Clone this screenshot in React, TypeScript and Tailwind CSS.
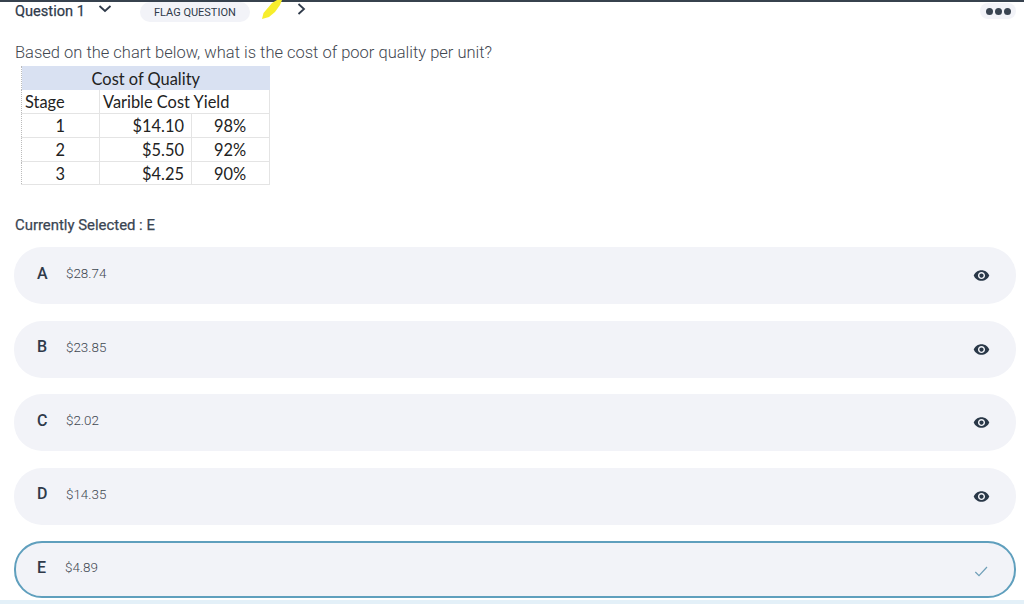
const options = [
  { letter: "A", value: "$28.74" },
  { letter: "B", value: "$23.85" },
  { letter: "C", value: "$2.02" },
  { letter: "D", value: "$14.35" },
];

function Eye() {
  return (
    <svg width="17" height="17" viewBox="0 0 24 24" className="text-[#2a3848]">
      <path
        fill="currentColor"
        d="M12 4.5C7 4.5 2.73 7.61 1 12c1.73 4.39 6 7.5 11 7.5s9.27-3.11 11-7.5c-1.73-4.39-6-7.5-11-7.5zM12 17c-2.76 0-5-2.24-5-5s2.24-5 5-5 5 2.24 5 5-2.24 5-5 5zm0-8c-1.66 0-3 1.34-3 3s1.34 3 3 3 3-1.34 3-3-1.34-3-3-3z"
      />
    </svg>
  );
}

function Option({ letter, value, selected }: { letter: string; value: string; selected?: boolean }) {
  return (
    <div
      className={
        selected
          ? "flex h-[57px] items-center rounded-[28px] border-2 border-[#5f9fbd] bg-[#f2f3f8] pl-[21px] pr-[25px]"
          : "flex h-[57px] items-center rounded-[28px] bg-[#f2f3f8] pl-[23px] pr-[26px]"
      }
    >
      <span className={selected ? "w-[28px] text-[16px] font-medium leading-none text-[#2f3a4a] -translate-y-[2px]" : "w-[29px] text-[16px] font-medium leading-none text-[#2f3a4a] -translate-y-[2px]"}>{letter}</span>
      <span className="-translate-y-[2px] text-[13.4px] font-light leading-none text-[#3f4750]">{value}</span>
      <span className="ml-auto flex">
        {selected ? (
          <svg width="16" height="16" viewBox="0 0 24 24" fill="none" stroke="#6f9fb8" strokeWidth="1.8" className="translate-y-[1px]">
            <path d="M3.5 13.5 9 19 21 6" />
          </svg>
        ) : (
          <Eye />
        )}
      </span>
    </div>
  );
}

const row = "h-[23.7px] border-b border-[#e4e4e4]";
const cell = "border-r border-[#e4e4e4] p-0 pt-[2px]";

export default function App() {
  return (
    <div className="flex h-[604px] w-[1024px] flex-col overflow-hidden bg-white font-['Roboto',sans-serif]">
      <div className="h-[2px] shrink-0 bg-[#37424e]" />
      <div className="flex h-[20px] shrink-0 items-center pl-[15px] pr-[8px]">
        <span className="-translate-y-px text-[14.6px] leading-none font-normal text-[#2f3a4a] [-webkit-text-stroke:0.25px_#2f3a4a]">Question 1</span>
        <svg width="16" height="14" viewBox="0 0 16 14" fill="none" stroke="#2f3a4a" strokeWidth="1.8" className="ml-[12px] -translate-y-[3px]">
          <path d="M2.5 4 8 9l5.5-5" />
        </svg>
        <span className="ml-[27px] flex h-[20px] w-[110px] items-center justify-center rounded-full bg-[#f2f3f8] text-[11px] leading-none text-[#2f3a4a]">
          FLAG QUESTION
        </span>
        <svg width="24" height="20" viewBox="0 0 24 20" className="ml-[10px] -translate-y-[2px]">
          <path d="M2 19 3.5 13 12 3l5-3h5l-2 5-5 7-6 5z" fill="#f7ee2c" />
        </svg>
        <svg width="12" height="14" viewBox="0 0 12 14" fill="none" stroke="#2f3a4a" strokeWidth="1.8" className="ml-[11px] -translate-y-[3px]">
          <path d="M3.5 2 9 7l-5.5 5" />
        </svg>
        <span className="ml-auto flex h-[16px] w-[36px] -translate-y-px items-center justify-center gap-[2px] rounded-full bg-[#f2f3f8]">
          <span className="h-[7px] w-[7px] rounded-full bg-[#3a4552]" />
          <span className="h-[7px] w-[7px] rounded-full bg-[#3a4552]" />
          <span className="h-[7px] w-[7px] rounded-full bg-[#3a4552]" />
        </span>
      </div>

      <p className="mt-[19px] pl-[15px] text-[16.5px] font-light leading-[23px] text-[#3f4750]">
        Based on the chart below, what is the cost of poor quality per unit?
      </p>

      <table className="ml-[21px] mt-[2px] w-[248px] shrink-0 table-fixed border-collapse border-l border-dotted border-l-[#bbb] font-['Lato',sans-serif] text-[16.4px] leading-none text-[#222]">
        <colgroup>
          <col className="w-[78px]" />
          <col className="w-[92px]" />
          <col className="w-[78px]" />
        </colgroup>
        <tbody>
          <tr className="h-[24px] bg-[#d9e1f2]">
            <td colSpan={3} className="p-0 pt-[2px] text-center">Cost of Quality</td>
          </tr>
          <tr className={row}>
            <td className={`${cell} pl-[3px]`}>Stage</td>
            <td className="p-0 pl-[3px] pt-[2px] whitespace-nowrap">Varible Cost</td>
            <td className={`${cell} pl-[2px]`}>Yield</td>
          </tr>
          {[
            ["1", "$14.10", "98%"],
            ["2", "$5.50", "92%"],
            ["3", "$4.25", "90%"],
          ].map(([a, b, c]) => (
            <tr key={a} className={row}>
              <td className={`${cell} pr-[34px] text-right`}>{a}</td>
              <td className={`${cell} pr-[7px] text-right`}>{b}</td>
              <td className={`${cell} pr-[23px] text-right`}>{c}</td>
            </tr>
          ))}
        </tbody>
      </table>

      <p className="mt-[31px] pl-[15px] text-[14.9px] leading-[18px] text-[#3a4552] [-webkit-text-stroke:0.25px_#3a4552]">Currently Selected : E</p>

      <div className="mx-[8px] mt-[13px] flex flex-col gap-[16.5px] pl-[6px] pr-0">
        {options.map((o) => (
          <Option key={o.letter} letter={o.letter} value={o.value} />
        ))}
        <Option letter="E" value="$4.89" selected />
      </div>
      <div className="mt-auto h-[4px] shrink-0 bg-[#e3f0f8]" />
    </div>
  );
}
